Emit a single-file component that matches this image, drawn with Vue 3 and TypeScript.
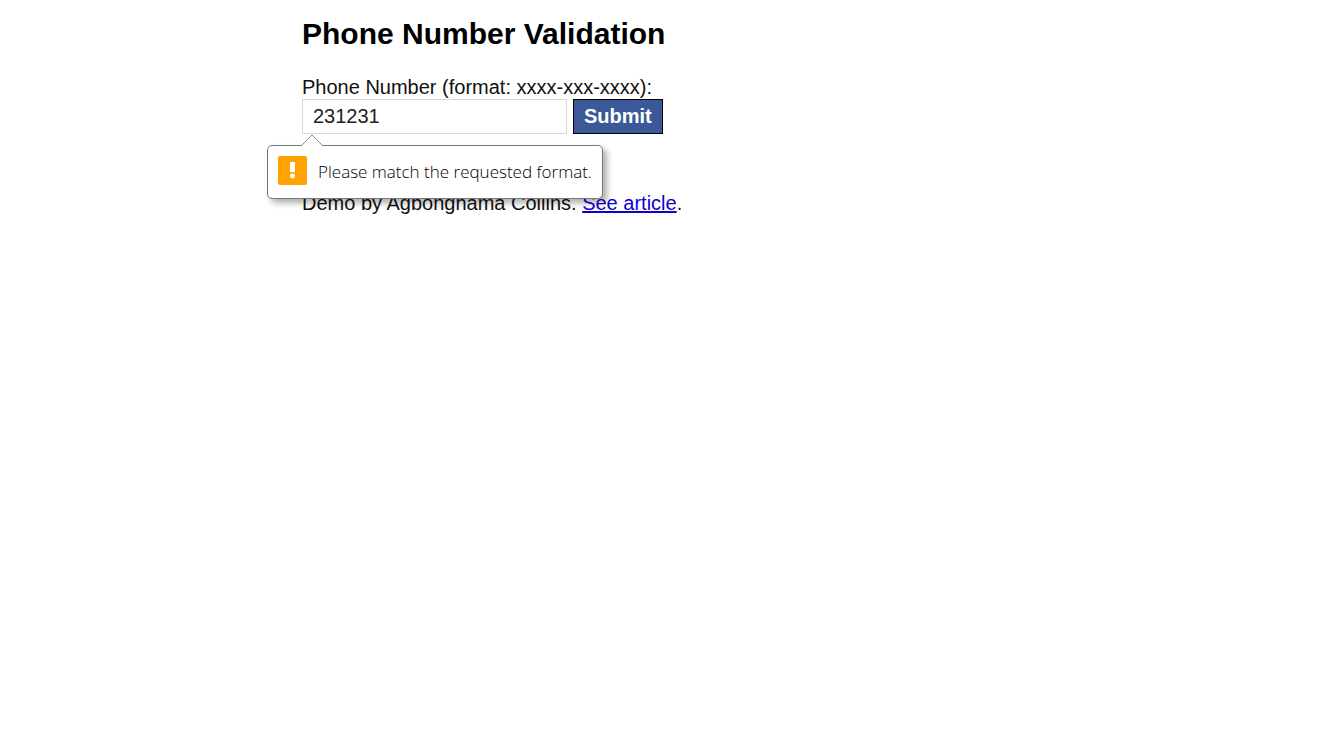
<script setup lang="ts">
import { ref } from 'vue'

const phone = ref<string>('231231')
</script>

<template>
  <main class="page">
    <h1 class="title">Phone Number Validation</h1>
    <form class="form" @submit.prevent>
      <label class="label" for="phone">Phone Number (format: xxxx-xxx-xxxx):</label>
      <div class="row">
        <div class="field">
          <input
            id="phone"
            v-model="phone"
            class="input"
            type="tel"
            aria-describedby="phone-error"
          />
          <div id="phone-error" class="bubble" role="alert">
            <svg class="arrow" width="22" height="12" viewBox="0 0 22 12" aria-hidden="true">
              <path d="M0.5 12L11 1L21.5 12Z" fill="#fff" />
              <path d="M0.5 11.5L11 1L21.5 11.5" fill="none" stroke="#8c8c8c" />
            </svg>
            <svg class="icon" width="29" height="29" viewBox="0 0 29 29" aria-hidden="true">
              <rect width="29" height="29" rx="2" fill="#ffa300" />
              <rect x="12" y="6" width="5" height="10" fill="#fff" />
              <circle cx="14.5" cy="20" r="2.5" fill="#fff" />
            </svg>
            <span class="message">Please match the requested format.</span>
          </div>
        </div>
        <button class="submit" type="submit">Submit</button>
      </div>
    </form>
    <p class="credit">Demo by Agbonghama Collins. <a class="link" href="#article">See article</a>.</p>
  </main>
</template>

<style>
body {
  margin: 0;
  background: #fff;
}
</style>

<style scoped>
.page {
  box-sizing: border-box;
  max-width: 736px;
  margin: 0 auto;
  padding: 16px 0;
  color: #111;
  font-family: "Liberation Sans", Arial, sans-serif;
  font-size: 20px;
  line-height: 24px;
}

.title {
  margin: 0 0 24px;
  color: #000;
  font-size: 30px;
  font-weight: 700;
  line-height: 35px;
}

.label {
  display: block;
}

.row {
  display: flex;
  gap: 6px;
}

.field {
  position: relative;
  width: 265px;
}

.input {
  box-sizing: border-box;
  display: block;
  width: 100%;
  height: 35px;
  margin: 0;
  padding: 0 10px;
  border: 1px solid #d8d8d8;
  border-radius: 0;
  outline: none;
  background: #fff;
  color: #222;
  font: inherit;
}

.submit {
  box-sizing: border-box;
  height: 35px;
  margin: 0;
  padding: 0 10px 2px;
  border: 1px solid #000;
  border-radius: 0;
  background: #3b5998;
  color: #fff;
  font: inherit;
  font-weight: 700;
}

.bubble {
  position: absolute;
  top: 46px;
  left: -35px;
  z-index: 1;
  box-sizing: border-box;
  display: flex;
  gap: 11px;
  padding: 10px;
  border: 1px solid #777;
  border-radius: 5px;
  background: #fff;
  box-shadow: 4px 4px 6px rgba(0, 0, 0, 0.32);
  color: #000;
  font-family: "Open Sans", "Noto Sans", sans-serif;
  font-size: 17px;
  font-weight: 300;
  line-height: 32px;
  white-space: nowrap;
}

.arrow {
  position: absolute;
  top: -12px;
  left: 33px;
}

.icon {
  flex: none;
}

.credit {
  margin: 57px 0 0;
}

.link {
  color: #1100cc;
  text-decoration: underline;
}
</style>
